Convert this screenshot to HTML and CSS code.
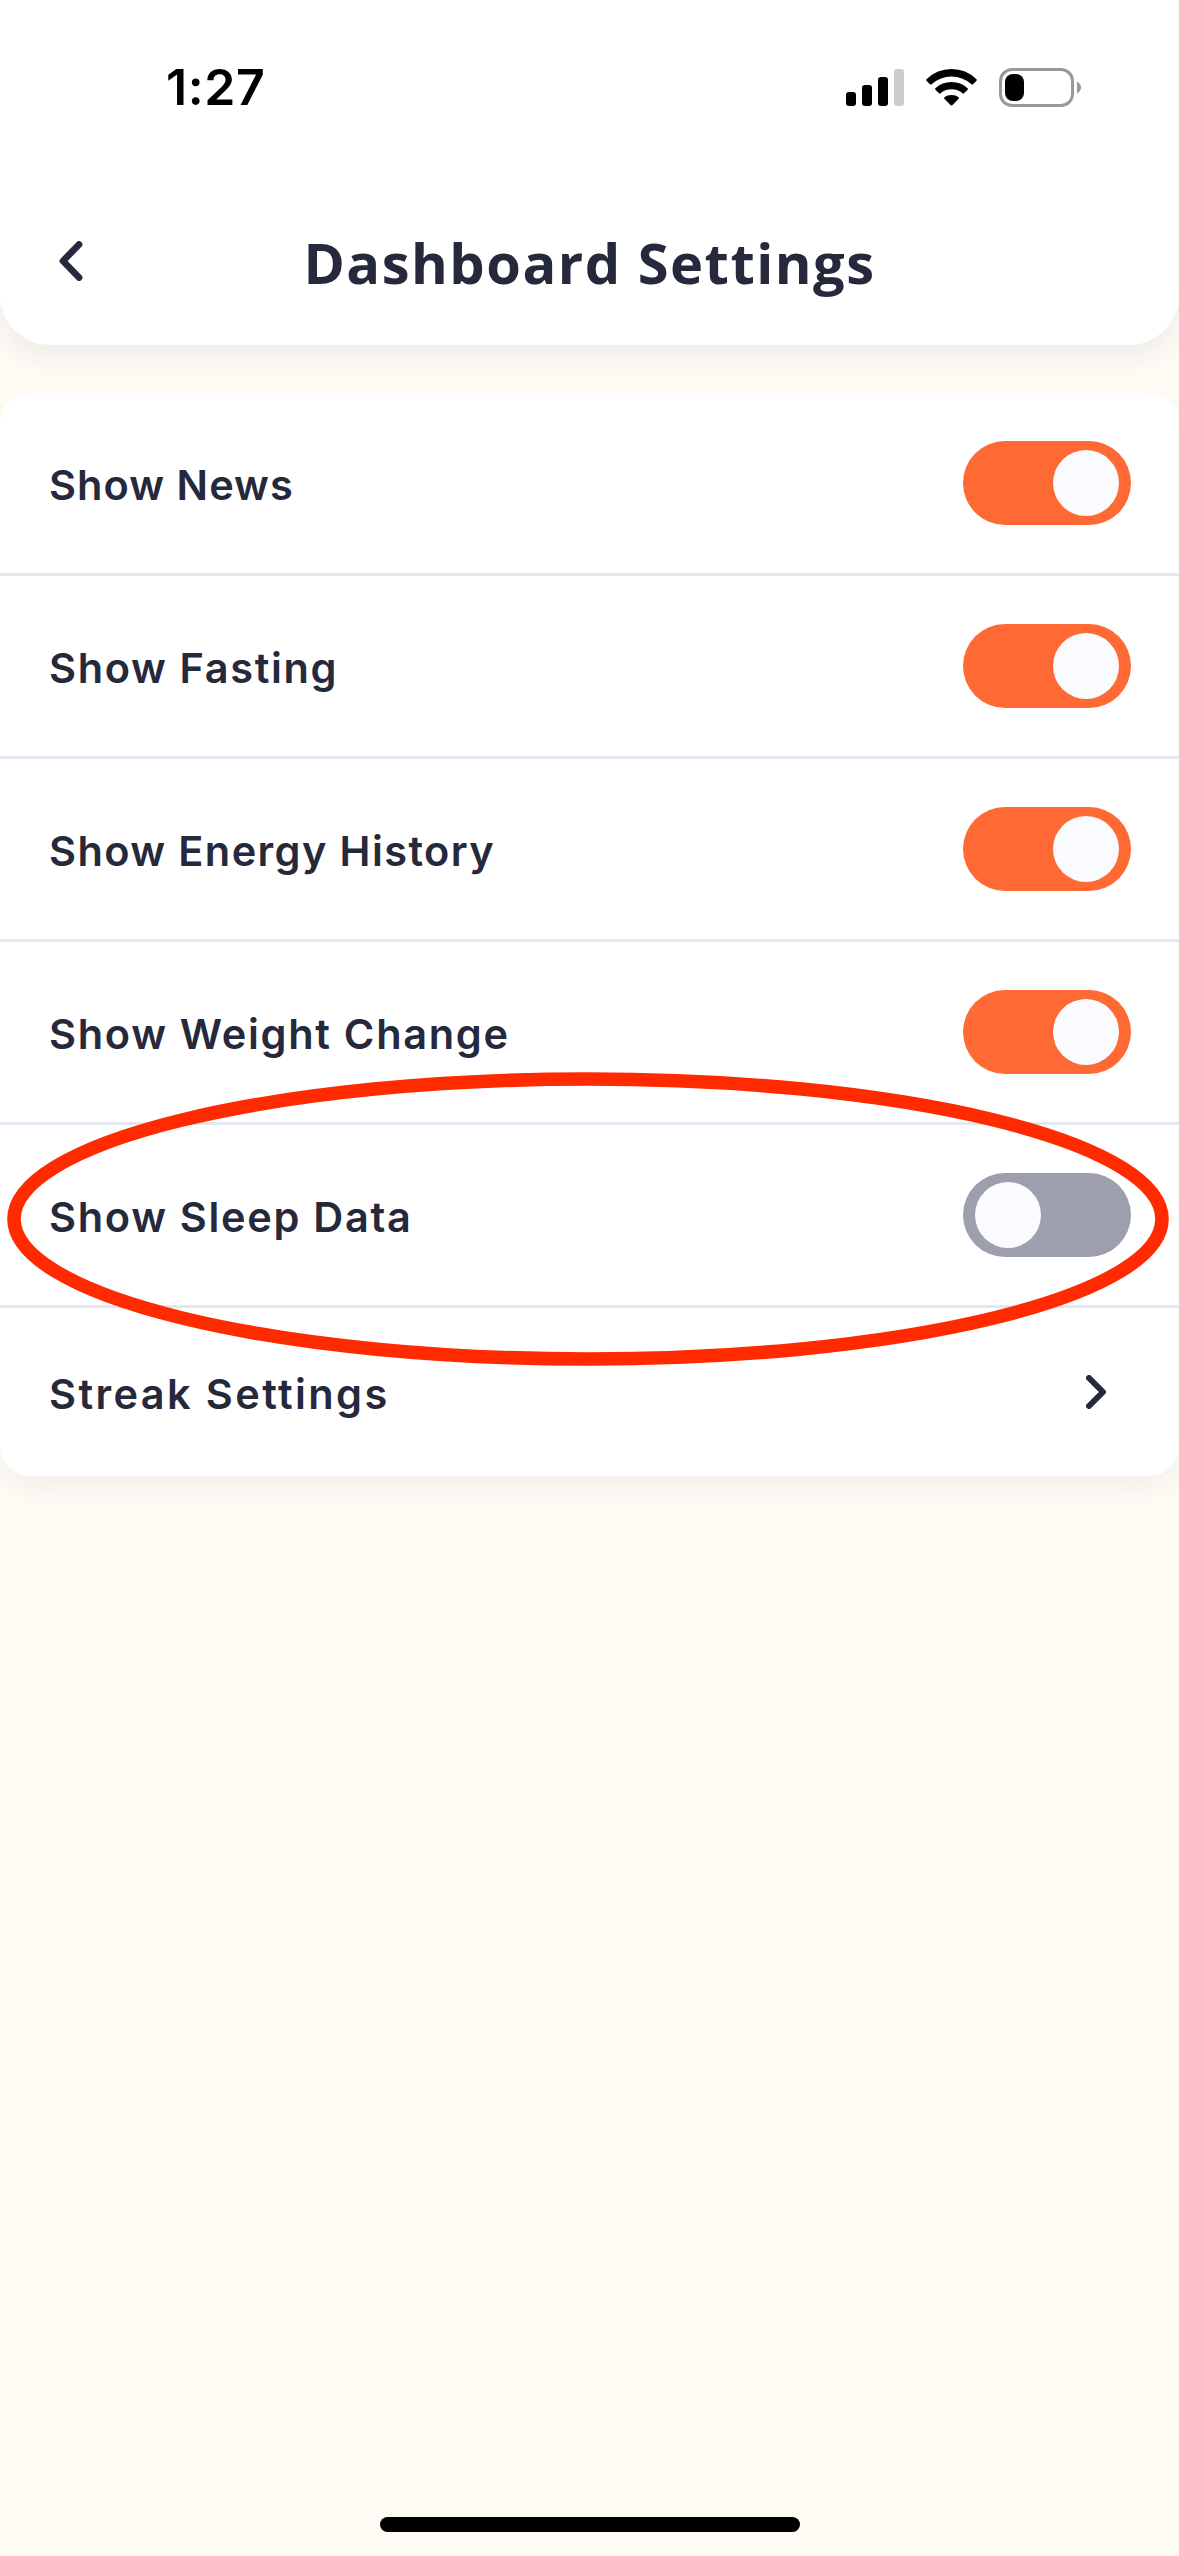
FILE: index.html
```html
<!DOCTYPE html>
<html lang="en">
<head>
<meta charset="utf-8">
<title>Dashboard Settings</title>
<link rel="stylesheet" href="styles.css">
</head>
<body>
<main class="screen">
  <header class="header">
    <div class="status-bar">
      <span class="time">1:27</span>
      <svg class="status-icons" width="238" height="43" viewBox="0 0 238 43" aria-hidden="true">
        <rect x="0" y="25" width="10" height="14" rx="3"/>
        <rect x="16" y="18" width="10" height="21" rx="3"/>
        <rect x="32" y="10" width="10" height="29" rx="3"/>
        <rect x="48" y="2" width="10" height="37" rx="3" fill="#ccc"/>
        <path d="M80.5 12.2Q91 2 105.500 2T130.500 12.200Q131.200 12.900 130.500 13.700L127 17.200Q126.200 17.900 125.400 17.200Q116.500 9.500 105.500 9.500T85.600 17.200Q84.800 17.900 84 17.200L80.500 13.700Q79.800 12.900 80.500 12.200Z"/>
        <path d="M89.400 21.200Q96 15 105.500 15T121.600 21.200Q122.300 22 121.600 22.700L118 26.300Q117.300 27 116.500 26.300Q112 22.300 105.500 22.300T94.500 26.300Q93.700 27 93 26.300L89.400 22.700Q88.700 22 89.400 21.200Z"/>
        <path d="M98.400 30.200Q101 28 105.500 28T112.600 30.200Q113.400 31 112.600 31.800L106.300 38.200Q105.500 39 104.700 38.200L98.400 31.800Q97.600 31 98.400 30.200Z"/>
        <rect x="154.500" y="2.500" width="72" height="36" rx="11.500" fill="none" stroke="#999" stroke-width="3"/>
        <rect x="159" y="7" width="19" height="27" rx="8"/>
        <path d="M231 14.500Q235 17 235 20.500T231 26.500Z" fill="#999"/>
      </svg>
    </div>
    <div class="nav-bar">
      <svg class="back" width="24" height="40" viewBox="0 0 24 40" role="img" aria-label="Back"><path class="chevron" d="M20 3.500L4 20L20 36.500"/></svg>
      <h1 class="title">Dashboard Settings</h1>
    </div>
  </header>
  <section class="card">
    <div class="row news"><span class="label">Show News</span><span class="toggle on"></span></div>
    <div class="row fasting"><span class="label">Show Fasting</span><span class="toggle on"></span></div>
    <div class="row energy"><span class="label">Show Energy History</span><span class="toggle on"></span></div>
    <div class="row weight"><span class="label">Show Weight Change</span><span class="toggle on"></span></div>
    <div class="row sleep"><span class="label">Show Sleep Data</span><span class="toggle"></span></div>
    <div class="row link"><span class="label">Streak Settings</span><svg class="next" width="20" height="34" viewBox="0 0 20 34" aria-hidden="true"><path class="chevron" d="M3 3L17 17L3 31"/></svg></div>
  </section>
  <svg class="highlight" width="1164" height="296" viewBox="0 0 1164 296" aria-hidden="true"><ellipse cx="582" cy="148" rx="574" ry="140"/></svg>
  <div class="home-indicator"></div>
</main>
</body>
</html>
```

FILE: styles.css
```css
* { box-sizing: border-box; }

body {
  margin: 0;
  background: #fffcf6;
  color: #26293b;
  font-family: Inter, "Liberation Sans", sans-serif;
}

.screen {
  position: relative;
  display: flex;
  flex-direction: column;
  height: 2556px;
  overflow: hidden;
}

.header {
  height: 345px;
  flex: none;
  background: #fff;
  border-radius: 0 0 50px 50px;
  box-shadow: 0 12px 30px rgba(38, 41, 59, 0.08);
}

.status-bar {
  display: flex;
  justify-content: space-between;
  align-items: center;
  height: 177px;
  padding: 0 95px 0 166px;
  color: #000;
}

.time {
  padding-bottom: 3px;
  font-size: 50px;
  font-weight: 600;
  line-height: 60px;
  letter-spacing: 0.6px;
}

.nav-bar {
  display: grid;
  grid-template-columns: 84px 1fr 84px;
  align-items: center;
  height: 168px;
}

.back { margin-left: 59px; }

.chevron {
  fill: none;
  stroke: #26293b;
  stroke-width: 6;
  stroke-linecap: round;
  stroke-linejoin: round;
}

.back .chevron { stroke-width: 6.8; }

.title {
  margin: 0;
  padding-top: 2px;
  text-align: center;
  white-space: nowrap;
  font: 700 56px/76px "Open Sans", sans-serif;
  letter-spacing: 1.5px;
}

.card {
  flex: none;
  margin-top: 48px;
  background: #fff;
  border-radius: 30px;
  box-shadow: 0 12px 30px rgba(38, 41, 59, 0.06);
}

.row {
  display: flex;
  align-items: center;
  justify-content: space-between;
  height: 183px;
  padding: 0 48px 0 49px;
  border-bottom: 3px solid #e4e6f0;
}

.row.link {
  height: 168px;
  padding-right: 73px;
  border-bottom: 0;
}

.label {
  padding-top: 3px;
  font-size: 41.5px;
  font-weight: 600;
  line-height: 56px;
}

.news .label { letter-spacing: 1.05px; }
.fasting .label { letter-spacing: 1.65px; }
.energy .label { letter-spacing: 1.4px; }
.weight .label { letter-spacing: 1.7px; }
.sleep .label { letter-spacing: 1.7px; }
.link .label { letter-spacing: 2.4px; }

.toggle {
  display: flex;
  align-items: center;
  width: 168px;
  height: 84px;
  padding: 0 12px;
  border-radius: 42px;
  background: #9d9fad;
}

.toggle.on {
  justify-content: flex-end;
  background: #ff6933;
}

.toggle::before {
  content: "";
  width: 66px;
  height: 66px;
  border-radius: 50%;
  background: #fafbff;
}

.highlight {
  position: absolute;
  left: 6px;
  top: 1071px;
  fill: none;
  stroke: #ff2a00;
  stroke-width: 13.6px;
}

.home-indicator {
  width: 420px;
  height: 15px;
  margin: auto auto 24px;
  border-radius: 8px;
  background: #000;
}
```
